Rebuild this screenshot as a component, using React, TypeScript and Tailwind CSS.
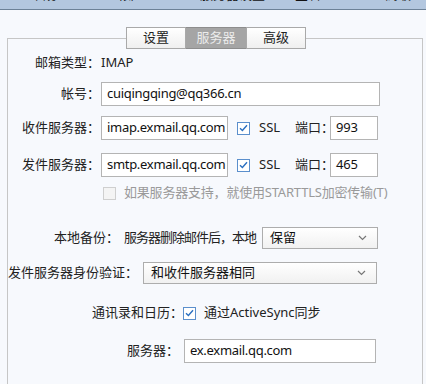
const font = { fontFamily: '"Noto Sans", "Noto Sans CJK SC", sans-serif' };

const Check = ({ checked = true, disabled = false }: { checked?: boolean; disabled?: boolean }) => (
  <span
    className={
      'flex h-[13px] w-[13px] shrink-0 items-center justify-center border ' +
      (disabled ? 'border-[#cfcfcf] bg-[#f4f4f4]' : 'border-[#5b8fcc] bg-white')
    }
  >
    {checked && (
      <svg width="9" height="8" viewBox="0 0 9 8" fill="none">
        <path d="M1 4.2 L3.4 6.5 L8 1.3" stroke="#2a6fc0" strokeWidth="1.4" />
      </svg>
    )}
  </span>
);

const Field = ({ value, className }: { value: string; className: string }) => (
  <div
    className={
      'flex h-full items-center whitespace-nowrap border border-[#b4b4b4] bg-white pl-[5px] text-[13px] tracking-[-0.3px] text-[#111] ' +
      className
    }
  >
    {value}
  </div>
);

const Select = ({ value, className }: { value: string; className: string }) => (
  <div
    className={
      'flex h-full items-center justify-between border border-[#adadad] bg-gradient-to-b from-[#ffffff] to-[#f1f1f1] pl-[7px] pr-[10px] text-[13px] text-[#111] ' +
      className
    }
  >
    <span className="whitespace-nowrap">{value}</span>
    <svg width="9" height="6" viewBox="0 0 9 6" fill="none">
      <path d="M1 1 L4.5 4.5 L8 1" stroke="#777" strokeWidth="1.2" />
    </svg>
  </div>
);

const Label = ({ text, className }: { text: string; className: string }) => (
  <div className={'shrink-0 whitespace-nowrap text-right text-[13px] text-[#222] ' + className}>{text}</div>
);

export default function App() {
  return (
    <div className="h-[384px] w-[426px] overflow-hidden bg-[#f7f9fd]" style={font}>
      <div className="flex h-[10px] overflow-hidden border-b border-[#6c8197] bg-[#b3c7df] text-[13px] leading-none text-[#111]">
        <span className="-mt-[12px] ml-[30px]">常规</span>
        <span className="-mt-[12px] ml-[62px]">帐户</span>
        <span className="-mt-[12px] ml-[56px]">服务器设置</span>
        <span className="-mt-[12px] ml-[30px]">签名</span>
        <span className="-mt-[12px] ml-[64px]">高级</span>
      </div>

      <fieldset className="ml-[7px] mt-[17px] h-[400px] w-[416px] border border-[#c6c6c6] px-0">
        <legend className="ml-[118px]">
          <div className="flex h-[22px] text-[13px]">
            <div className="flex w-[60px] items-center justify-center border border-[#a9a9a9] bg-gradient-to-b from-[#ffffff] to-[#efefef] text-[#222]">
              设置
            </div>
            <div className="flex w-[60px] items-center justify-center border-y border-[#8d8d8d] bg-[#a5a5a5] text-[#ececec]">
              服务器
            </div>
            <div className="flex w-[60px] items-center justify-center border border-[#a9a9a9] bg-gradient-to-b from-[#ffffff] to-[#efefef] text-[#222]">
              高级
            </div>
          </div>
        </legend>

        <div className="flex flex-col">
          <div className="mt-[4px] flex h-[20px] items-center">
            <Label text="邮箱类型：" className="w-[92px]" />
            <span className="ml-[1px] text-[13px] text-[#222]">IMAP</span>
          </div>

          <div className="mt-[9px] flex h-[24px] items-center">
            <Label text="帐号：" className="w-[92px]" />
            <Field value="cuiqingqing@qq366.cn" className="ml-[1px] w-[279px]" />
          </div>

          <div className="mt-[10px] flex h-[24px] items-center">
            <Label text="收件服务器：" className="w-[92px]" />
            <Field value="imap.exmail.qq.com" className="ml-[1px] w-[127px] overflow-hidden" />
            <span className="ml-[9px]"><Check /></span>
            <span className="ml-[9px] text-[13px] text-[#222]">SSL</span>
            <span className="ml-[15px] whitespace-nowrap text-[13px] text-[#222]">端口：</span>
            <Field value="993" className="ml-[-4px] w-[48px]" />
          </div>

          <div className="mt-[13px] flex h-[24px] items-center">
            <Label text="发件服务器：" className="w-[92px]" />
            <Field value="smtp.exmail.qq.com" className="ml-[1px] w-[127px] overflow-hidden" />
            <span className="ml-[9px]"><Check /></span>
            <span className="ml-[9px] text-[13px] text-[#222]">SSL</span>
            <span className="ml-[15px] whitespace-nowrap text-[13px] text-[#222]">端口：</span>
            <Field value="465" className="ml-[-4px] w-[48px]" />
          </div>

          <div className="mt-[7px] flex h-[18px] items-center">
            <span className="ml-[95px]"><Check checked={false} disabled /></span>
            <span className="ml-[8px] whitespace-nowrap text-[13px] tracking-[-0.2px] text-[#9a9a9a]">
              如果服务器支持，就使用STARTTLS加密传输(T)
            </span>
          </div>

          <div className="mt-[25px] flex h-[22px] items-center">
            <Label text="本地备份：" className="w-[111px]" />
            <span className="ml-[5px] whitespace-nowrap text-[13px] tracking-[-1px] text-[#222]">服务器删除邮件后，本地</span>
            <Select value="保留" className="ml-auto mr-[44px] w-[116px]" />
          </div>

          <div className="mt-[13px] flex h-[22px] items-center">
            <Label text="发件服务器身份验证：" className="w-[118px]" />
            <Select value="和收件服务器相同" className="ml-[17px] w-[234px]" />
          </div>

          <div className="mt-[20px] flex h-[18px] items-center">
            <Label text="通讯录和日历：" className="w-[175px]" />
            <Check />
            <span className="ml-[8px] whitespace-nowrap text-[13px] text-[#222]">通过ActiveSync同步</span>
          </div>

          <div className="mt-[17px] flex h-[24px] items-center">
            <Label text="服务器：" className="w-[171px]" />
            <Field value="ex.exmail.qq.com" className="ml-[5px] w-[192px]" />
          </div>
        </div>
      </fieldset>
    </div>
  );
}
